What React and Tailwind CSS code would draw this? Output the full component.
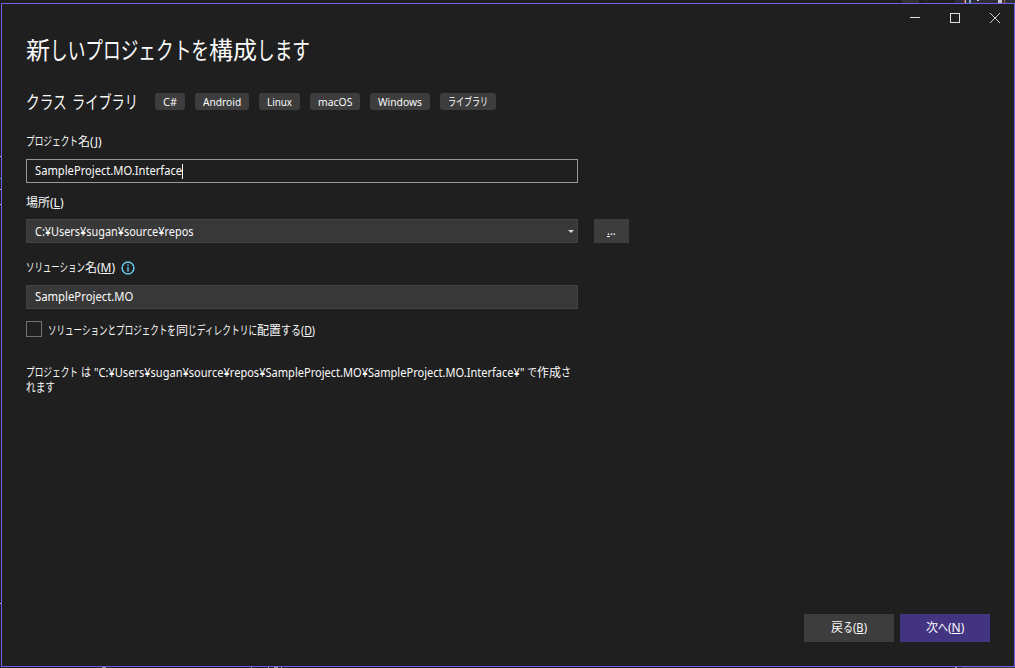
import { useLayoutEffect, useRef, useState } from "react";

/* A run of text condensed or stretched to occupy exactly `w` pixels. */
function Run({ w, children }) {
  const ref = useRef(null);
  const [scale, setScale] = useState(1);
  useLayoutEffect(() => {
    setScale(w / ref.current.offsetWidth);
  }, [w]);
  return (
    <span className="inline-block shrink-0 whitespace-pre" style={{ width: w }}>
      <span
        ref={ref}
        className="inline-block origin-left whitespace-pre"
        style={{ transform: `scaleX(${scale})` }}
      >
        {children}
      </span>
    </span>
  );
}

function Key({ w, k }) {
  return (
    <Run w={w}>
      (<span className="underline underline-offset-1">{k}</span>)
    </Run>
  );
}

const tags = [
  ["C#", 14],
  ["Android", 38],
  ["Linux", 25],
  ["macOS", 34],
  ["Windows", 44],
  ["ライブラリ", 40],
];

function TitleBar() {
  return (
    <div className="flex h-7 shrink-0 items-center justify-end gap-[30px] pr-3.5 text-[#e0e0e0]">
      <svg width="10" height="10" shapeRendering="crispEdges"><path d="M0 4.5H10" stroke="currentColor" /></svg>
      <svg width="10" height="10" shapeRendering="crispEdges"><path d="M.5 .5H9.5V9.5H.5Z" fill="none" stroke="currentColor" /></svg>
      <svg width="10" height="10"><path d="M0 0L10 10M10 0L0 10" stroke="currentColor" strokeWidth="0.9" /></svg>
    </div>
  );
}

export default function App() {
  return (
    <div className="flex h-[668px] w-[1015px] flex-col overflow-hidden bg-[#1c1c20] font-['Noto_Sans','Noto_Sans_CJK_JP',sans-serif] text-[12px] leading-4 text-[#fafafa]">
      {/* Slivers of the editor window behind the dialog */}
      <svg className="block shrink-0" width="1015" height="3" shapeRendering="crispEdges">
        <path d="M0 0H1015V3H0Z" fill="#1e1e1c" />
        <path d="M902 0H919V3H902ZM926 0H927V3H926Z" fill="#333333" />
        <path d="M955 0H1015V3H955Z" fill="#2d2d3a" />
        <path d="M964 0H965V3H964Z" fill="#c23b3b" />
        <path d="M965 0H966V3H965ZM998 0H1002V3H998ZM977 0H979V1H977Z" fill="#c8c8c8" />
        <path d="M969 0H971V3H969Z" fill="#7ea9d0" />
        <path d="M1004 0H1005V3H1004Z" fill="#b8683c" />
      </svg>
      <div className="flex h-[664px] shrink-0">
        <svg className="block shrink-0" width="1" height="664" shapeRendering="crispEdges">
          <path d="M0 153H1V154H0ZM0 186H1V187H0ZM0 201H1V202H0ZM0 600H1V601H0Z" fill="#c8c8c8" />
          <path d="M0 175H1V176H0Z" fill="#4a9db8" />
        </svg>
        <main className="flex h-[664px] w-[1014px] flex-col border border-[#7160e8] bg-[#1f1f1f]">
          <TitleBar />
          <div className="flex grow flex-col pl-6">
            <h1 className="flex h-9 items-center text-[24px] leading-9">
              <Run w={24}>新</Run><Run w={159}>しいプロジェクトを</Run><Run w={48}>構成</Run><Run w={53}>します</Run>
            </h1>
            <div className="mt-[17px] flex h-[33px] items-center">
              <h2 className="flex w-[129px] shrink-0 gap-[5px] text-[18px] leading-7">
                <Run w={41}>クラス</Run><Run w={66}>ライブラリ</Run>
              </h2>
              <ul className="flex gap-2.5">
                {tags.map(([t, w]) => (
                  <li key={t} className="flex h-[17px] items-center rounded-[3px] bg-[#3d3d3d] px-2 text-[11px]">
                    <Run w={w}>{t}</Run>
                  </li>
                ))}
              </ul>
            </div>

            <label className="mt-4 flex h-4 items-center"><Run w={52}>プロジェクト</Run><Run w={12}>名</Run><Key w={12} k="J" /></label>
            <div className="mt-[9px] flex h-6 w-[552px] items-center border border-[#999999] px-2">
              <Run w={147}>SampleProject.MO.Interface</Run>
              <span className="h-[15px] w-px bg-white" />
            </div>

            <label className="mt-3 flex h-4 items-center"><Run w={24}>場所</Run><Key w={14} k="L" /></label>
            <div className="mt-2 flex gap-4">
              <div className="flex h-6 w-[552px] items-center justify-between border border-[#424242] bg-[#383838] pr-[3px] pl-2">
                <span className="flex pt-0.5"><Run w={158}>C:¥Users¥sugan¥source¥repos</Run></span>
                <svg width="6" height="3"><path d="M0 0H6L3 3Z" fill="#d6d6d6" /></svg>
              </div>
              <button className="flex h-6 w-[35px] items-center justify-center bg-[#3d3d3d]"><Run w={9}><span className="underline underline-offset-1">.</span>..</Run></button>
            </div>

            <label className="mt-[17px] flex h-4 items-center">
              <Run w={59}>ソリューション</Run><Run w={12}>名</Run><Key w={18} k="M" />
              <svg className="ml-1.5" width="14" height="14" viewBox="0 0 14 14" fill="none" stroke="#63c5ea">
                <circle cx="7" cy="7" r="5.9" strokeWidth="1.5" />
                <path d="M7 6V10.5M7 3.5V5" strokeWidth="1.5" />
              </svg>
            </label>
            <div className="mt-[9px] flex h-6 w-[552px] items-center border border-[#424242] bg-[#383838] px-2">
              <Run w={98}>SampleProject.MO</Run>
            </div>

            <div className="mt-3 flex h-4 items-center">
              <span className="mr-1.5 size-4 border border-[#717171]" />
              <span className="flex pt-[3px]"><Run w={128}>ソリューションとプロジェクトを</Run><Run w={12}>同</Run><Run w={69}>じディレクトリに</Run><Run w={24}>配置</Run><Run w={20}>する</Run><Key w={14} k="D" /></span>
            </div>

            <div className="mt-[28px] leading-[15px]">
              <div className="flex h-[15px]"><Run w={52}>プロジェクト</Run><span className="w-[3px]" /><Run w={10}>は</Run><span className="w-[3px]" /><Run w={430}>"C:¥Users¥sugan¥source¥repos¥SampleProject.MO¥SampleProject.MO.Interface¥"</Run><span className="w-[3px]" /><Run w={10}>で</Run><Run w={24}>作成</Run><Run w={10}>さ</Run></div>
              <div className="flex h-[15px]"><Run w={29}>れます</Run></div>
            </div>

            <div className="mt-auto mr-6 mb-6 flex justify-end gap-1.5">
              <button className="flex h-7 w-[90px] items-center justify-center bg-[#3d3d3d]"><Run w={12}>戻</Run><Run w={10}>る</Run><Key w={14} k="B" /></button>
              <button className="flex h-7 w-[90px] items-center justify-center bg-[#433482]"><Run w={12}>次</Run><Run w={10}>へ</Run><Key w={16} k="N" /></button>
            </div>
          </div>
        </main>
      </div>
      <svg className="block shrink-0" width="1015" height="1" shapeRendering="crispEdges">
        <path d="M102 0H106V1H102ZM268 0H269V1H268ZM274 0H278V1H274ZM281 0H282V1H281ZM955 0H957V1H955Z" fill="#9a9aa6" />
        <path d="M251 0H252V1H251Z" fill="#5a86c0" />
        <path d="M962 0H1015V1H962Z" fill="#3a3a3c" />
      </svg>
    </div>
  );
}
